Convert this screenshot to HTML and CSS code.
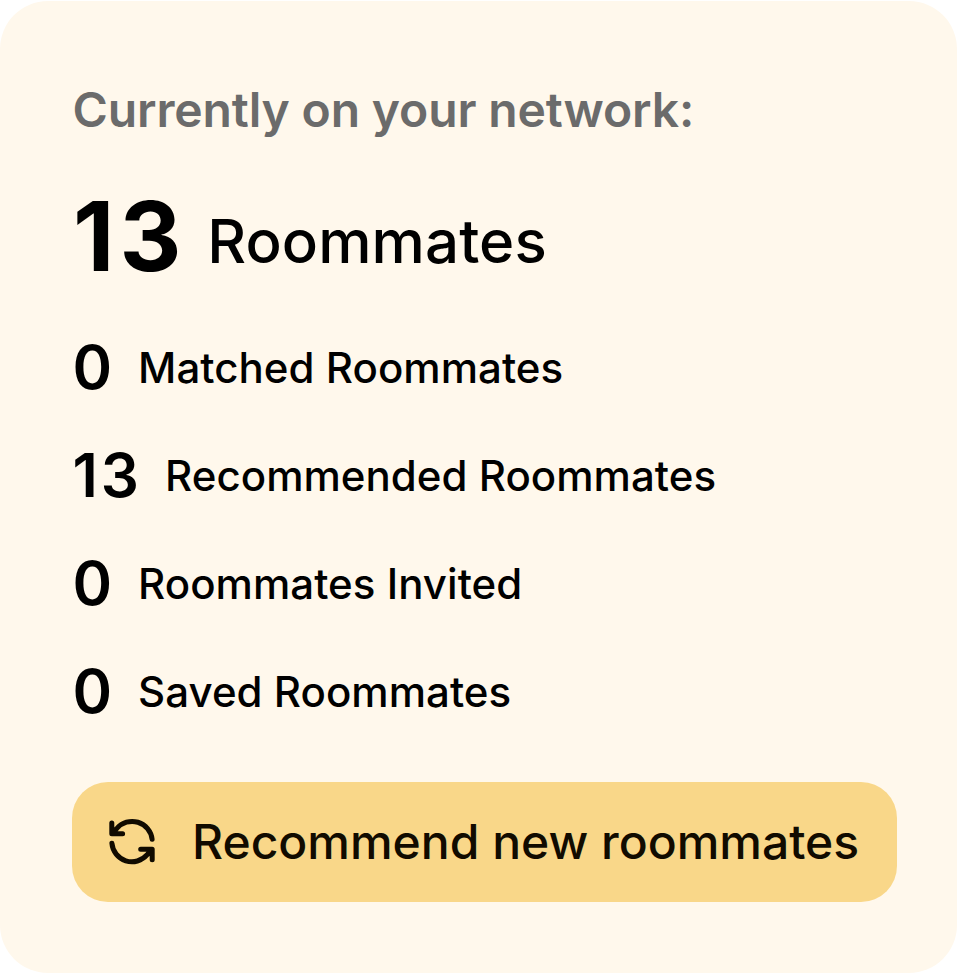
FILE: index.html
```html
<!DOCTYPE html>
<html lang="en">
<head>
<meta charset="utf-8">
<title>Roommate network</title>
<link rel="stylesheet" href="styles.css">
</head>
<body>
<main class="card">
  <h1 class="title">Currently on your network:</h1>
  <div class="total"><span class="total-count">13</span><span class="total-label">Roommates</span></div>
  <ul class="stats">
    <li class="stat"><span class="count">0</span><span class="label">Matched Roommates</span></li>
    <li class="stat"><span class="count">13</span><span class="label">Recommended Roommates</span></li>
    <li class="stat"><span class="count">0</span><span class="label">Roommates Invited</span></li>
    <li class="stat"><span class="count">0</span><span class="label">Saved Roommates</span></li>
  </ul>
  <button class="action" type="button">
    <svg class="icon" viewBox="0 0 48 48" aria-hidden="true"><path d="M3.800 5V15.700H14.600M4.200 15.300L8.800 10.500A20.100 20.100 0 0 1 44.100 21.200M44.200 41.700V31.300H32.700M43.800 31.700L39.200 36.700A20.100 20.100 0 0 1 3.900 25.300"/></svg>
    <span>Recommend new roommates</span>
  </button>
</main>
</body>
</html>
```
FILE: styles.css
```css
* { box-sizing: border-box; }
body { margin: 0; padding-top: 1px; background: #fff; font-family: Inter, sans-serif; font-optical-sizing: none; color: #000; }
.card { width: 957px; height: 972px; padding: 80px 60px 71.5px 72px; border-radius: 48px; background: #fff8ec; display: flex; flex-direction: column; white-space: nowrap; }
.title { margin: 0; padding-left: 0.5px; font-size: 48px; line-height: 58px; font-weight: 600; letter-spacing: -0.13px; color: #6b6b6b; }
.total { display: flex; align-items: center; gap: 21px; margin-top: 39px; height: 116px; line-height: 116px; }
.total-count { padding-left: 1px; font-size: 96px; font-weight: 700; letter-spacing: 5px; }
.total-label { font-size: 60px; font-weight: 500; letter-spacing: 0.1px; padding-top: 10px; line-height: 72px; }
.stats { list-style: none; margin: 37px 0 0; padding: 0; display: flex; flex-direction: column; gap: 36px; }
.stat { display: flex; align-items: center; gap: 23px; height: 72px; }
.count { padding-left: 0.5px; font-size: 60px; font-weight: 600; letter-spacing: 3px; }
.label { font-size: 42px; font-weight: 500; letter-spacing: 0.04px; }
.action { display: flex; align-items: center; gap: 36px; width: 825px; height: 120px; margin: auto 0 0; padding: 0 36px; border: 0; border-radius: 36px; background: #f9d789; color: #110b00; font: 500 48px Inter, sans-serif; font-optical-sizing: none; }
.icon { width: 48px; height: 48px; fill: none; stroke: currentColor; stroke-width: 5; stroke-linecap: round; stroke-linejoin: round; overflow: visible; }
```
